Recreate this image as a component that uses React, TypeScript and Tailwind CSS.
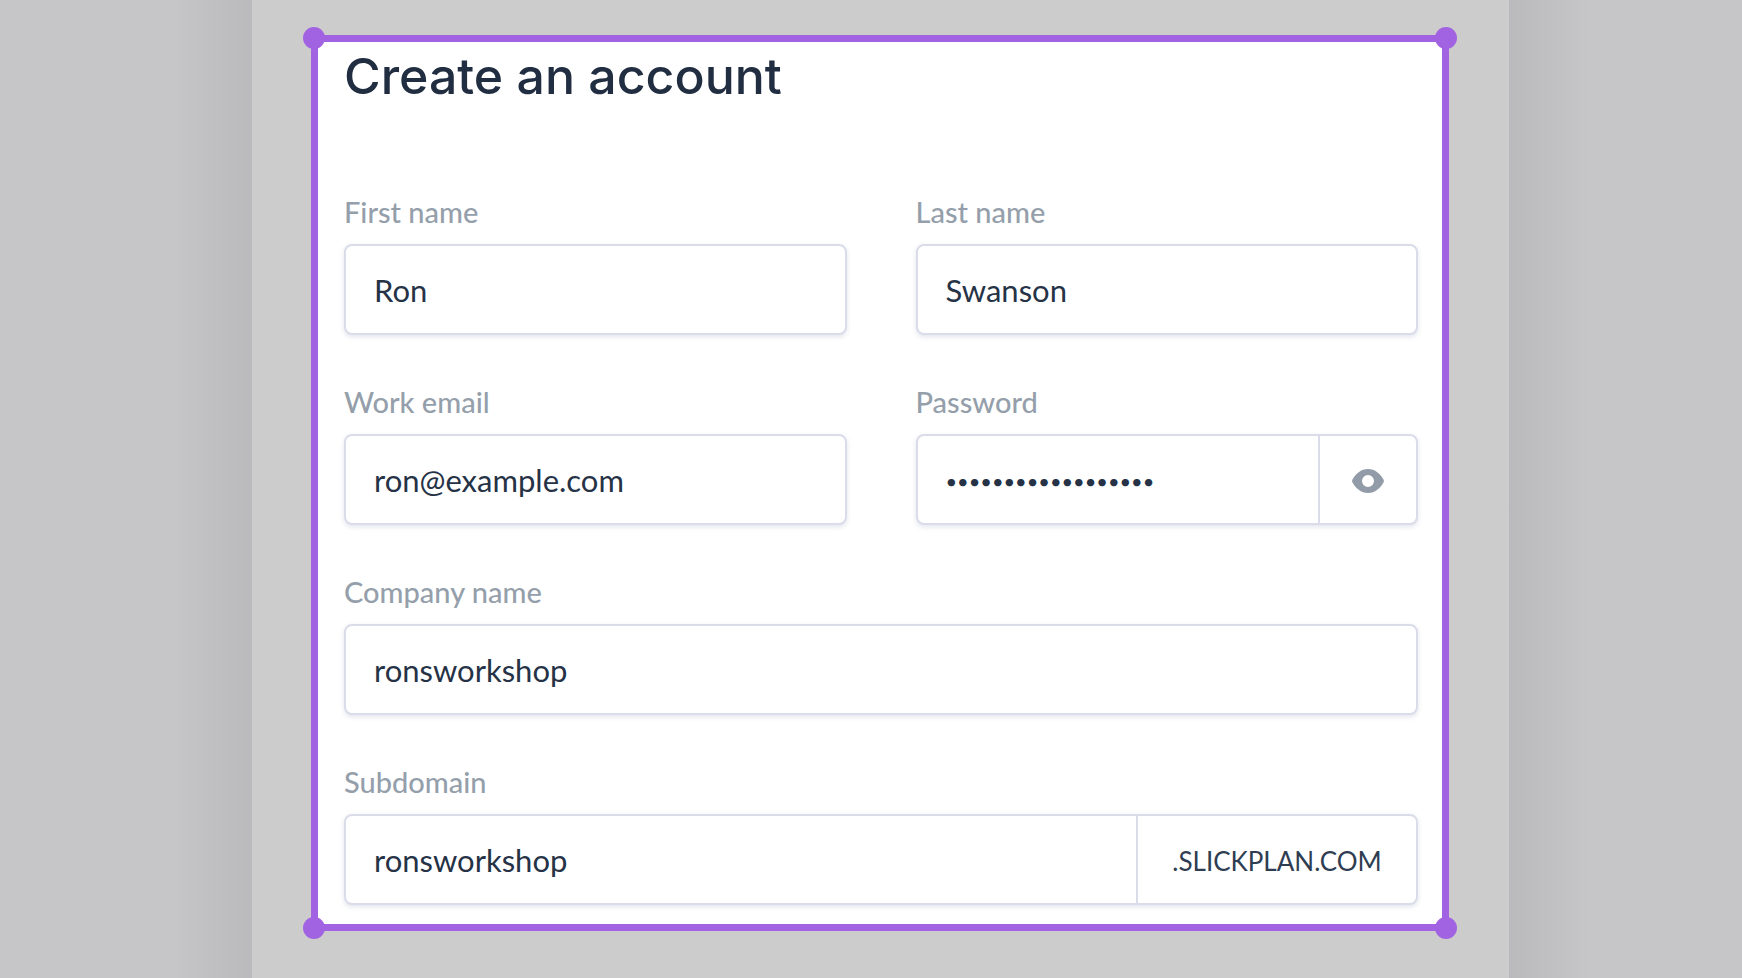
import { useState } from "react";
import type { InputHTMLAttributes, ReactNode } from "react";

interface FieldProps extends InputHTMLAttributes<HTMLInputElement> {
  id: string;
  label: string;
  wide?: boolean;
  addon?: ReactNode;
}

function Field({ id, label, wide = false, addon, type = "text", ...input }: FieldProps) {
  return (
    <div className={wide ? "md:col-span-2" : ""}>
      <label
        htmlFor={id}
        className="mb-[14px] block text-[29px] leading-9 font-medium text-[#959fab]"
      >
        {label}
      </label>
      <div className="flex h-[91px] overflow-hidden rounded-lg border-2 border-[#dadce9] bg-white shadow-[0_2px_5px_rgba(60,70,130,0.14)]">
        <input
          id={id}
          type={type}
          className={`min-w-0 flex-1 bg-transparent px-7 pt-[2px] text-[#263246] outline-none ${
            type === "password" ? "text-[20px]" : "text-[31px]"
          }`}
          {...input}
        />
        {addon}
      </div>
    </div>
  );
}

function EyeIcon() {
  return (
    <svg viewBox="0 0 32 24" className="h-6 w-8 fill-[#929ca8]" aria-hidden="true">
      <path
        fillRule="evenodd"
        d="M16 0C23 0 28.500 5 31.500 10.500Q32.300 12 31.500 13.500C28.500 19 23 24 16 24S3.500 19 .5 13.500Q-.3 12 .5 10.500C3.500 5 9 0 16 0ZM16 6a6 6 0 1 0 0 12a6 6 0 0 0 0-12Z"
      />
    </svg>
  );
}

export default function App() {
  const [showPassword, setShowPassword] = useState(false);

  return (
    <div className="flex min-h-screen font-['Lato',sans-serif]">
      <div className="w-[252px] shrink-0 bg-linear-to-l from-[#bababc] to-[#c6c6c8] to-[80px]" />
      <main className="min-w-0 flex-1 bg-[#cccccc] pt-[35px] pr-[60px] pb-[46px] pl-[59px]">
        <form className="relative border-[7px] border-[#a163e1] bg-white pt-[6px] pr-6 pb-[19px] pl-[26px]">
          {/* selection handles */}
          <span className="absolute -top-[15px] -left-[15px] size-[22px] rounded-full bg-[#a163e1]" />
          <span className="absolute -top-[15px] -right-[15px] size-[22px] rounded-full bg-[#a163e1]" />
          <span className="absolute -bottom-[15px] -left-[15px] size-[22px] rounded-full bg-[#a163e1]" />
          <span className="absolute -right-[15px] -bottom-[15px] size-[22px] rounded-full bg-[#a163e1]" />

          <h1 className="mb-[90px] font-['Inter',sans-serif] text-[50px] leading-[56px] font-medium text-[#212d40]">
            Create an account
          </h1>

          <div className="grid gap-x-[69px] gap-y-[49px] md:grid-cols-2">
            <Field id="first-name" label="First name" defaultValue="Ron" />
            <Field id="last-name" label="Last name" defaultValue="Swanson" />
            <Field id="email" label="Work email" type="email" defaultValue="ron@example.com" />
            <Field
              id="password"
              label="Password"
              type={showPassword ? "text" : "password"}
              defaultValue="breakfastandbaconn"
              addon={
                <button
                  type="button"
                  aria-label="Show password"
                  onClick={() => setShowPassword(!showPassword)}
                  className="flex w-[98px] items-center justify-center border-l-2 border-[#dadce9] pt-[3px]"
                >
                  <EyeIcon />
                </button>
              }
            />
            <Field id="company" label="Company name" wide defaultValue="ronsworkshop" />
            <Field
              id="subdomain"
              label="Subdomain"
              wide
              defaultValue="ronsworkshop"
              addon={
                <span className="flex w-[280px] items-center justify-center border-l-2 border-[#dadce9] pt-[3px] text-[26px] text-[#2f3d52]">
                  .SLICKPLAN.COM
                </span>
              }
            />
          </div>
        </form>
      </main>
      <div className="w-[233px] shrink-0 bg-linear-to-r from-[#bababc] to-[#c6c6c8] to-[80px]" />
    </div>
  );
}
